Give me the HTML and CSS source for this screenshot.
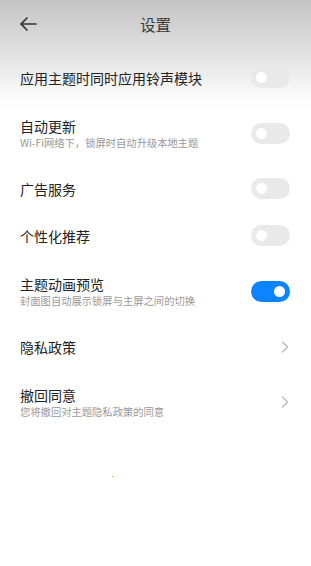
FILE: index.html
```html
<!DOCTYPE html>
<html lang="zh">
<head>
<meta charset="utf-8">
<title>设置</title>
<link rel="stylesheet" href="styles.css">
</head>
<body>
<div class="page">
  <header class="header">
    <svg class="back" width="18" height="14" viewBox="0 0 18 14"><path d="M17 7H2M8 1L2 7l6 6" fill="none" stroke="#333" stroke-width="1.7" stroke-linecap="round" stroke-linejoin="round"/></svg>
    <div class="title">设置</div>
  </header>
  <div class="list">
    <div class="row single">
      <div class="text"><div class="label">应用主题时同时应用铃声模块</div></div>
      <div class="switch"><span class="knob"></span></div>
    </div>
    <div class="row double">
      <div class="text"><div class="label">自动更新</div><div class="sub">Wi-Fi网络下，锁屏时自动升级本地主题</div></div>
      <div class="switch"><span class="knob"></span></div>
    </div>
    <div class="row single">
      <div class="text"><div class="label">广告服务</div></div>
      <div class="switch"><span class="knob"></span></div>
    </div>
    <div class="row single">
      <div class="text"><div class="label">个性化推荐</div></div>
      <div class="switch"><span class="knob"></span></div>
    </div>
    <div class="row double">
      <div class="text"><div class="label">主题动画预览</div><div class="sub">封面图自动展示锁屏与主屏之间的切换</div></div>
      <div class="switch on"><span class="knob"></span></div>
    </div>
    <div class="row single">
      <div class="text"><div class="label">隐私政策</div></div>
      <svg class="chev" width="8" height="12" viewBox="0 0 8 12"><path d="M1.5 1l5 5-5 5" fill="none" stroke="#b5b5b5" stroke-width="1.2" stroke-linecap="round" stroke-linejoin="round"/></svg>
    </div>
    <div class="row double">
      <div class="text"><div class="label">撤回同意</div><div class="sub">您将撤回对主题隐私政策的同意</div></div>
      <svg class="chev" width="8" height="12" viewBox="0 0 8 12"><path d="M1.5 1l5 5-5 5" fill="none" stroke="#b5b5b5" stroke-width="1.2" stroke-linecap="round" stroke-linejoin="round"/></svg>
    </div>
  </div>
  <div class="dot"></div>
</div>
</body>
</html>
```
FILE: styles.css
```css
html, body {
  margin: 0;
  padding: 0;
}
body {
  width: 311px;
  height: 566px;
  overflow: hidden;
  background: #fff;
  font-family: "Noto Sans CJK SC", "Noto Sans", sans-serif;
  color: #333;
}
.page {
  height: 566px;
  background: linear-gradient(to bottom, #c4c4c4 0px, #dadada 40px, #eeeeee 75px, #fafafa 95px, #ffffff 110px);
}
.header {
  height: 54px;
  display: flex;
  align-items: center;
  justify-content: center;
  position: relative;
  padding-bottom: 4px;
  box-sizing: border-box;
}
.back {
  position: absolute;
  left: 19px;
  top: 17px;
}
.title {
  font-size: 15.5px;
  color: #3a3a3a;
  line-height: 20px;
  margin-top: -2px;
}
.list {
  display: flex;
  flex-direction: column;
}
.row {
  display: flex;
  align-items: center;
  justify-content: space-between;
  padding: 0 21px 0 20px;
  box-sizing: border-box;
}
.row.single { height: 47px; }
.row.double { height: 64px; }
.text {
  display: flex;
  flex-direction: column;
  gap: 1px;
}
.label {
  font-size: 14px;
  line-height: 18px;
  color: #222;
}
.sub {
  font-size: 10.3px;
  line-height: 14px;
  color: #999;
}
.switch {
  width: 39px;
  height: 21px;
  border-radius: 11px;
  background: #e9e9e9;
  display: flex;
  align-items: center;
  padding: 0 5px;
  box-sizing: border-box;
}
.knob {
  width: 11px;
  height: 11px;
  border-radius: 50%;
  background: #fff;
}
.switch.on {
  background: #0d84ff;
  justify-content: flex-end;
}
.chev {
  margin-right: 1px;
}
.dot {
  width: 1px;
  height: 1px;
  background: #a8b030;
  margin: 42px 0 0 112px;
}
```
